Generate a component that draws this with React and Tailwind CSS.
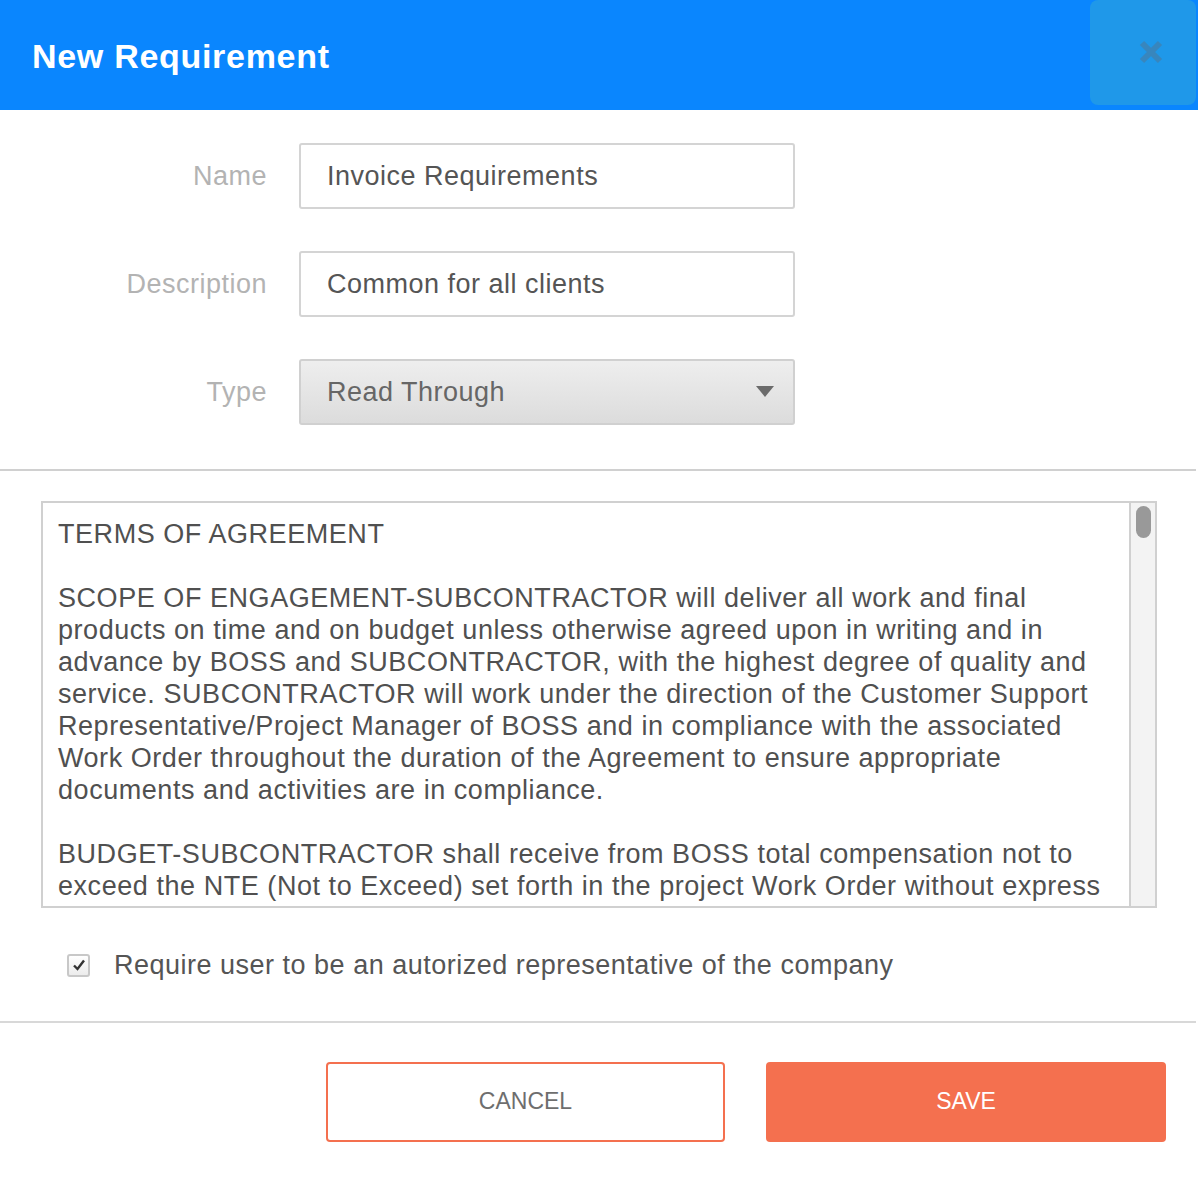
import React, { useState } from "react";

const termsLines = [
  ["TERMS OF AGREEMENT"],
  [],
  [
    "SCOPE OF ENGAGEMENT-SUBCONTRACTOR will deliver all work and final",
    "products on time and on budget unless otherwise agreed upon in writing and in",
    "advance by BOSS and SUBCONTRACTOR, with the highest degree of quality and",
    "service. SUBCONTRACTOR will work under the direction of the Customer Support",
    "Representative/Project Manager of BOSS and in compliance with the associated",
    "Work Order throughout the duration of the Agreement to ensure appropriate",
    "documents and activities are in compliance.",
  ],
  [],
  [
    "BUDGET-SUBCONTRACTOR shall receive from BOSS total compensation not to",
    "exceed the NTE (Not to Exceed) set forth in the project Work Order without express",
  ],
];

function Field({ label, children }) {
  return (
    <div className="flex items-center">
      <label className="w-[267px] text-right text-[27px] tracking-[0.5px] text-[#b3b3b3]">{label}</label>
      <div className="ml-[32px] w-[496px]">{children}</div>
    </div>
  );
}

export default function App() {
  const [name, setName] = useState("Invoice Requirements");
  const [desc, setDesc] = useState("Common for all clients");
  const [checked, setChecked] = useState(true);

  return (
    <div className="w-[1198px] h-[1200px] bg-white font-['Liberation_Sans',Arial,sans-serif]">
      {/* header */}
      <div className="h-[110px] bg-[#0a86fe] flex items-start justify-between">
        <h1 className="pl-[32px] pt-[39px] text-[34px] font-bold text-white leading-none tracking-[0.7px]">
          New Requirement
        </h1>
        <button className="relative w-[106px] h-[105px] mr-[2px] rounded-[8px] bg-[#1f98e9]">
          <svg width="24" height="24" viewBox="0 0 24 24" className="absolute left-[49px] top-[40px]">
            <path d="M3 3 L21 21 M21 3 L3 21" stroke="#3886bd" strokeWidth="6" />
          </svg>
        </button>
      </div>

      {/* form */}
      <div className="pt-[33px] pb-[44px] flex flex-col gap-[42px]">
        <Field label="Name">
          <input
            value={name}
            onChange={(e) => setName(e.target.value)}
            className="w-full h-[66px] border-2 border-[#d4d4d4] rounded-[3px] px-[26px] text-[27px] tracking-[0.5px] text-[#555] outline-none"
          />
        </Field>
        <Field label="Description">
          <input
            value={desc}
            onChange={(e) => setDesc(e.target.value)}
            className="w-full h-[66px] border-2 border-[#d4d4d4] rounded-[3px] px-[26px] text-[27px] tracking-[0.5px] text-[#555] outline-none"
          />
        </Field>
        <Field label="Type">
          <div className="w-full h-[66px] border-2 border-[#d0d0d0] rounded-[3px] pl-[26px] pr-[19px] flex items-center justify-between bg-gradient-to-b from-[#eeeeee] to-[#dcdcdc]">
            <span className="text-[27px] tracking-[0.5px] text-[#666]">Read Through</span>
            <svg width="18" height="12" viewBox="0 0 18 12">
              <path d="M0 0 H18 L9 11 Z" fill="#6b6b6b" />
            </svg>
          </div>
        </Field>
      </div>

      <div className="h-[2px] bg-[#d0d0d0] mr-[2px]" />

      {/* terms */}
      <div className="pt-[30px] px-[41px]">
        <div className="h-[407px] border-2 border-[#d0d0d0] flex overflow-hidden">
          <div className="flex-1 overflow-hidden pl-[15px] pt-[15px] text-[27px] tracking-[0.55px] leading-[32px] text-[#505050]">
            {termsLines.map((para, i) =>
              para.length === 0 ? (
                <div key={i} className="h-[32px]" />
              ) : (
                para.map((line, j) => (
                  <div key={i + "-" + j} className="whitespace-nowrap">
                    {line}
                  </div>
                ))
              )
            )}
          </div>
          <div className="w-[26px] bg-[#f3f3f3] border-l-2 border-[#d0d0d0] flex justify-center pt-[3px]">
            <div className="w-[15px] h-[32px] rounded-full bg-[#999]" />
          </div>
        </div>
      </div>

      {/* checkbox */}
      <div className="flex items-center pl-[67px] pt-[37px] pb-[35px]">
        <button
          onClick={() => setChecked(!checked)}
          className="w-[23px] h-[23px] border-2 border-[#c8c8c8] rounded-[3px] bg-gradient-to-b from-white to-[#ececec] flex items-center justify-center"
        >
          {checked && (
            <svg width="14" height="14" viewBox="0 0 14 14">
              <path d="M2 7.5 L5.5 11 L12 2.5" stroke="#333" strokeWidth="2.4" fill="none" />
            </svg>
          )}
        </button>
        <span className="ml-[24px] text-[27px] tracking-[0.5px] text-[#555]">
          Require user to be an autorized representative of the company
        </span>
      </div>

      <div className="h-[2px] bg-[#d8d8d8] mr-[2px]" />

      {/* actions */}
      <div className="flex justify-end gap-[41px] pr-[32px] pt-[39px]">
        <button className="w-[399px] h-[80px] border-2 border-[#f4704f] rounded-[4px] bg-white text-[23px] text-[#6e6e6e]">
          CANCEL
        </button>
        <button className="w-[400px] h-[80px] rounded-[4px] bg-[#f4704f] text-[23px] text-white">
          SAVE
        </button>
      </div>
    </div>
  );
}
